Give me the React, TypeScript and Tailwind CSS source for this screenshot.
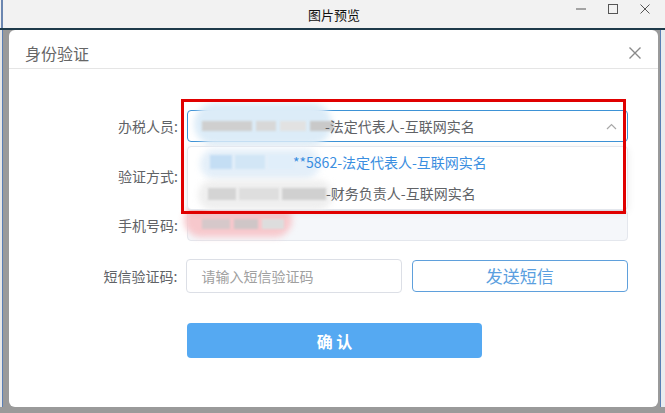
import React from "react";

const font = { fontFamily: '"Noto Sans CJK SC", "Noto Sans", sans-serif' };

function Blob({ className }: { className: string }) {
  return <div className={"absolute rounded-full blur-[3px] " + className} />;
}

export default function App() {
  return (
    <div className="w-[665px] h-[413px] flex flex-col overflow-hidden bg-[#9a9a9a]" style={font}>
      {/* title bar */}
      <div className="h-[28px] flex items-center bg-[#f2f2f2] relative">
        <div className="w-[2px] h-full bg-[#6b86b0] ml-[1px]" />
        <div className="flex-1 text-center text-[13px] text-[#111] leading-none">图片预览</div>
        <div className="absolute right-[12px] top-[2px] flex items-center gap-[16px] text-[#555]">
          <svg width="16" height="14" viewBox="0 0 16 14"><path d="M3 7h10" stroke="#555" strokeWidth="1" /></svg>
          <svg width="16" height="14" viewBox="0 0 16 14"><rect x="3.5" y="2.5" width="9" height="9" fill="none" stroke="#555" strokeWidth="1" /></svg>
          <svg width="16" height="14" viewBox="0 0 16 14"><path d="M3.5 2.5l9 9M12.5 2.5l-9 9" stroke="#555" strokeWidth="1" /></svg>
        </div>
      </div>
      <div className="h-[2px] bg-[#1e3a4a]" />
      <div className="flex-1 flex">
        {/* left strip */}
        <div className="w-[9px] flex">
          <div className="w-[2px] bg-[#e8e8e8]" />
          <div className="w-[1px] bg-[#5a7fb5]" />
          <div className="flex-1 bg-[#9a9a9a]" />
        </div>
        {/* dialog */}
        <div className="w-[649px] h-[377px] bg-white rounded-[6px] flex flex-col relative">
          <div className="h-[39px] flex items-center justify-between pt-[8px] pl-[16px] pr-[16px] border-b border-[#e5e5e5]">
            <span className="text-[16px] text-[#666]">身份验证</span>
            <svg width="14" height="14" viewBox="0 0 14 14"><path d="M1.5 1.5l11 11M12.5 1.5l-11 11" stroke="#8a8a8a" strokeWidth="1.4" /></svg>
          </div>
          <div className="flex flex-col pt-[41px] pr-[30px] gap-[18px]">
            {/* row 1 */}
            <div className="flex items-center gap-[9px] relative">
              <div className="w-[169px] text-right text-[14px] text-[#606266]">办税人员:</div>
              <div className="flex-1 h-[32px] border border-[#3d92d6] rounded-[4px] flex items-center pl-[137px] pr-[10px] relative">
                <Blob className="left-[6px] top-[-8px] w-[138px] h-[42px] bg-[#dcecf8]" />
                <div className="absolute left-[14px] top-[10px] flex gap-[4px] blur-[1px]">
                  <div className="w-[50px] h-[10px] bg-[#cfcfcf]" />
                  <div className="w-[20px] h-[10px] bg-[#d8d8d8]" />
                  <div className="w-[26px] h-[10px] bg-[#e2e2e2]" />
                  <div className="w-[24px] h-[10px] bg-[#c9c9c9]" />
                </div>
                <span className="text-[14px] text-[#606266] flex-1 relative">-法定代表人-互联网实名</span>
                <svg width="11" height="7" viewBox="0 0 11 7"><path d="M1 6l4.5-4.5L10 6" fill="none" stroke="#a8a8a8" strokeWidth="1.2" /></svg>
              </div>
              {/* dropdown */}
              <div className="absolute left-[178px] top-[36px] w-[441px] h-[64px] bg-white border border-[#e4e7ed] rounded-[4px] shadow-[0_2px_8px_rgba(0,0,0,0.08)] z-10 flex flex-col">
                <div className="h-[32px] flex items-center pl-[105px] text-[14px] text-[#3a8ee0] relative">
                  <Blob className="left-[12px] top-[2px] w-[120px] h-[30px] bg-[#e4eff9]" />
                  <div className="absolute left-[22px] top-[8px] flex gap-[3px] blur-[1px]">
                    <div className="w-[22px] h-[14px] bg-[#c4def4]" />
                    <div className="w-[30px] h-[14px] bg-[#d2e6f6]" />
                    <div className="w-[26px] h-[14px] bg-[#e0eefa]" />
                  </div>
                  <span className="relative">**5862-法定代表人-互联网实名</span>
                </div>
                <div className="h-[32px] flex items-center pl-[138px] text-[14px] text-[#606266] relative">
                  <Blob className="left-[10px] top-[2px] w-[135px] h-[30px] bg-[#efefef]" />
                  <div className="absolute left-[20px] top-[10px] flex gap-[3px] blur-[1px]">
                    <div className="w-[28px] h-[12px] bg-[#d4d4d4]" />
                    <div className="w-[40px] h-[12px] bg-[#dedede]" />
                    <div className="w-[44px] h-[12px] bg-[#d0d0d0]" />
                  </div>
                  <span className="relative">-财务负责人-互联网实名</span>
                </div>
              </div>
              {/* red annotation box */}
              <div className="absolute left-[172px] top-[-11px] w-[445px] h-[115px] border-[3px] border-[#e00000] z-20 pointer-events-none" />
            </div>
            {/* row 2 */}
            <div className="flex items-center gap-[9px]">
              <div className="w-[169px] text-right text-[14px] text-[#606266]">验证方式:</div>
              <div className="flex-1 h-[32px] border border-[#dcdfe6] rounded-[4px]" />
            </div>
            {/* row 3 */}
            <div className="flex items-center gap-[9px]">
              <div className="w-[169px] text-right text-[14px] text-[#606266]">手机号码:</div>
              <div className="flex-1 h-[31px] border border-[#e4e7ed] bg-[#f5f7fa] rounded-[4px] relative">
                <Blob className="left-[-4px] top-[-8px] w-[108px] h-[34px] bg-[#f7c8cc]" />
                <div className="absolute left-[14px] top-[8px] flex gap-[4px] blur-[1px]">
                  <div className="w-[28px] h-[10px] bg-[#d6c8ca]" />
                  <div className="w-[24px] h-[10px] bg-[#cfc6c7]" />
                  <div className="w-[22px] h-[10px] bg-[#ddd]" />
                </div>
              </div>
            </div>
            {/* row 4 */}
            <div className="flex items-center gap-[9px]">
              <div className="w-[169px] text-right text-[14px] text-[#606266]">短信验证码:</div>
              <div className="w-[216px] h-[34px] border border-[#dcdfe6] rounded-[4px] flex items-center pl-[14px] text-[14px] text-[#a0a0a0]">请输入短信验证码</div>
              <div className="w-[217px] h-[32px] ml-[1px] border border-[#5fa0dc] rounded-[4px] flex items-center justify-center text-[17px] text-[#5b9fe0]">发送短信</div>
            </div>
          </div>
          <div className="pl-[178px] mt-[30px]">
            <div className="w-[295px] h-[35px] bg-[#55a9f2] rounded-[4px] flex items-center justify-center text-white text-[16px] font-bold">确 认</div>
          </div>
        </div>
        {/* right strip */}
        <div className="flex-1 flex">
          <div className="w-[2px] bg-[#9a9a9a]" />
          <div className="w-[1px] bg-[#5a7fb5]" />
          <div className="flex-1 bg-[#e9ecef]" />
        </div>
      </div>
      <div className="h-[6px] bg-[#9a9a9a]" />
    </div>
  );
}
